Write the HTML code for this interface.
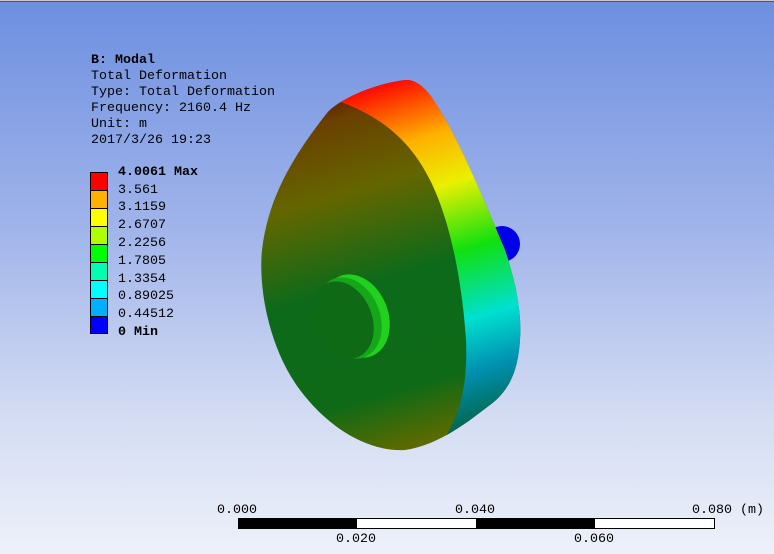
<!DOCTYPE html>
<html><head><meta charset="utf-8"><style>
*{margin:0;padding:0}
body{width:774px;height:554px;overflow:hidden;position:relative;background:linear-gradient(to bottom,#6d8fe0 0%,#9fb3ea 40%,#d3dcf3 75%,#eef1fa 100%);font-family:"Liberation Mono",monospace;font-size:13.33px;color:#000}
.top{position:absolute;left:0;top:0;width:774px;height:1px;background:#c8c8c8}
.top2{position:absolute;left:0;top:1px;width:774px;height:1px;background:#555}
.t{position:absolute;white-space:pre;line-height:16px}
.b{font-weight:bold}
</style></head><body>
<div class="top"></div><div class="top2"></div>
<svg width="774" height="554" style="position:absolute;left:0;top:0">
<defs>
<linearGradient id="face" x1="0.3" y1="0" x2="0.5" y2="1">
<stop offset="0" stop-color="#5a0800"/><stop offset="0.1" stop-color="#6a4000"/><stop offset="0.3" stop-color="#646600"/><stop offset="0.55" stop-color="#0c6a1a"/><stop offset="0.85" stop-color="#0e6a16"/><stop offset="1" stop-color="#5a6a00"/>
</linearGradient>
<linearGradient id="side" x1="0" y1="0" x2="0.2" y2="1">
<stop offset="0" stop-color="#c00000"/><stop offset="0.1" stop-color="#ff1000"/><stop offset="0.25" stop-color="#ffb000"/><stop offset="0.38" stop-color="#eaf000"/><stop offset="0.55" stop-color="#10e010"/><stop offset="0.72" stop-color="#00e0d0"/><stop offset="0.85" stop-color="#0090b0"/><stop offset="1" stop-color="#006040"/>
</linearGradient>
<clipPath id="cl"><path d="M407 80 C415 80 423 86 430 95 C455 130 480 190 505 250 C515 280 522 310 520 340 C518 370 510 390 490 405 C470 420 440 445 405 450 C370 452 330 430 300 390 C270 350 258 290 262 250 C268 200 290 160 327 113 C340 98 380 82 407 80 Z"/></clipPath>
</defs>
<circle cx="502" cy="244" r="18" fill="#0000e8"/>
<path d="M407 80 C415 80 423 86 430 95 C455 130 480 190 505 250 C515 280 522 310 520 340 C518 370 510 390 490 405 C470 420 440 445 405 450 C370 452 330 430 300 390 C270 350 258 290 262 250 C268 200 290 160 327 113 C340 98 380 82 407 80 Z" fill="url(#face)"/>
<g clip-path="url(#cl)">
<path d="M335 100 C380 115 410 140 430 180 C450 220 462 280 466 340 C468 390 458 420 440 445 L600 460 L600 60 L335 60 Z" fill="url(#side)"/>
</g>
<ellipse cx="356" cy="316" rx="32" ry="43" transform="rotate(-22 356 316)" fill="#22d020"/>
<ellipse cx="349" cy="318" rx="31" ry="42" transform="rotate(-22 349 318)" fill="#14a818"/>
<ellipse cx="343" cy="320" rx="29" ry="40" transform="rotate(-22 343 320)" fill="#0f6a16"/>
<rect x="238.5" y="518.5" width="476" height="10" fill="#fff" stroke="#000"/>
<rect x="238" y="518" width="119" height="11" fill="#000"/>
<rect x="476" y="518" width="119" height="11" fill="#000"/>
</svg>
<div class="t b" style="left:91px;top:53px">B: Modal</div>
<div class="t" style="left:91px;top:69px">Total Deformation</div>
<div class="t" style="left:91px;top:85px">Type: Total Deformation</div>
<div class="t" style="left:91px;top:101px">Frequency: 2160.4 Hz</div>
<div class="t" style="left:91px;top:117px">Unit: m</div>
<div class="t" style="left:91px;top:133px">2017/3/26 19:23</div>
<div style="position:absolute;left:90px;top:172px;width:18px;height:162px;border:1px solid #000;box-sizing:border-box">
<div style="height:18px;background:#ff0000;border-bottom:1px solid #000;box-sizing:border-box"></div>
<div style="height:18px;background:#ffb000;border-bottom:1px solid #000;box-sizing:border-box"></div>
<div style="height:18px;background:#ffff00;border-bottom:1px solid #000;box-sizing:border-box"></div>
<div style="height:18px;background:#b0ff00;border-bottom:1px solid #000;box-sizing:border-box"></div>
<div style="height:18px;background:#00ff00;border-bottom:1px solid #000;box-sizing:border-box"></div>
<div style="height:18px;background:#00ffb0;border-bottom:1px solid #000;box-sizing:border-box"></div>
<div style="height:18px;background:#00ffff;border-bottom:1px solid #000;box-sizing:border-box"></div>
<div style="height:18px;background:#00b0ff;border-bottom:1px solid #000;box-sizing:border-box"></div>
<div style="height:16px;background:#0000ff"></div>
</div>
<div class="t b" style="left:118px;top:165px">4.0061 Max</div>
<div class="t" style="left:118px;top:183px">3.561</div>
<div class="t" style="left:118px;top:200px">3.1159</div>
<div class="t" style="left:118px;top:218px">2.6707</div>
<div class="t" style="left:118px;top:236px">2.2256</div>
<div class="t" style="left:118px;top:254px">1.7805</div>
<div class="t" style="left:118px;top:272px">1.3354</div>
<div class="t" style="left:118px;top:289px">0.89025</div>
<div class="t" style="left:118px;top:307px">0.44512</div>
<div class="t b" style="left:118px;top:325px">0 Min</div>
<div class="t" style="left:217px;top:503px">0.000</div>
<div class="t" style="left:455px;top:503px">0.040</div>
<div class="t" style="left:692px;top:503px">0.080 (m)</div>
<div class="t" style="left:336px;top:532px">0.020</div>
<div class="t" style="left:574px;top:532px">0.060</div>
</body></html>
